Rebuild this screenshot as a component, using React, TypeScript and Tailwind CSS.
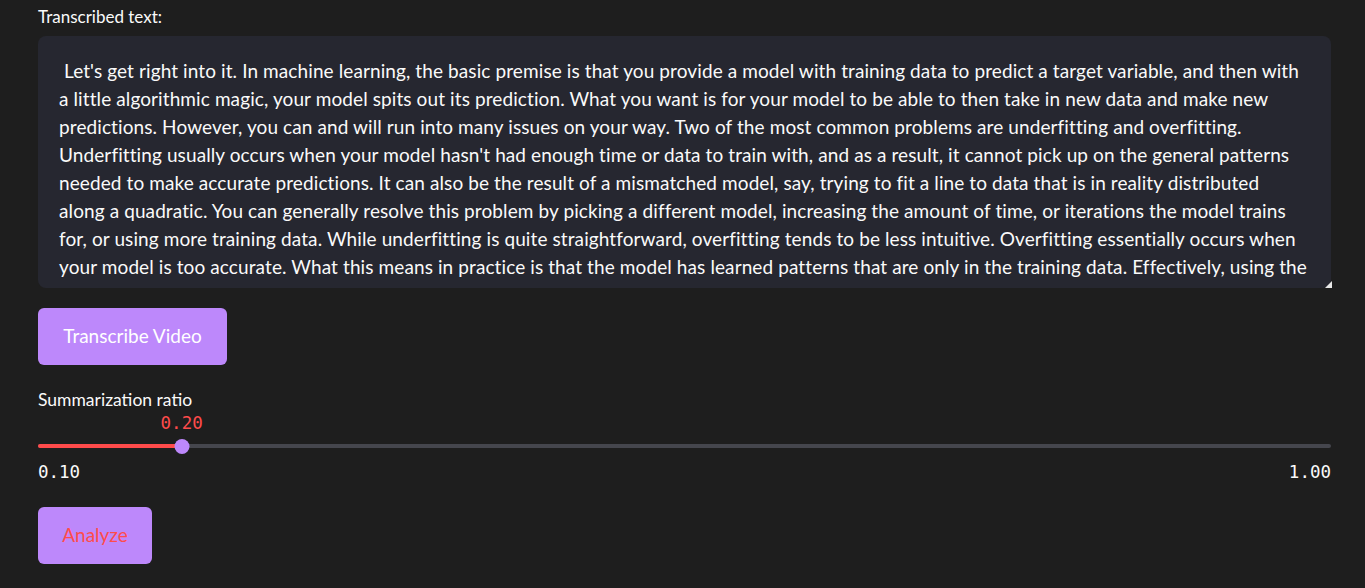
const lines = [
  " Let's get right into it. In machine learning, the basic premise is that you provide a model with training data to predict a target variable, and then with",
  "a little algorithmic magic, your model spits out its prediction. What you want is for your model to be able to then take in new data and make new",
  "predictions. However, you can and will run into many issues on your way. Two of the most common problems are underfitting and overfitting.",
  "Underfitting usually occurs when your model hasn't had enough time or data to train with, and as a result, it cannot pick up on the general patterns",
  "needed to make accurate predictions. It can also be the result of a mismatched model, say, trying to fit a line to data that is in reality distributed",
  "along a quadratic. You can generally resolve this problem by picking a different model, increasing the amount of time, or iterations the model trains",
  "for, or using more training data. While underfitting is quite straightforward, overfitting tends to be less intuitive. Overfitting essentially occurs when",
  "your model is too accurate. What this means in practice is that the model has learned patterns that are only in the training data. Effectively, using the",
];

export default function App() {
  const ratio = 0.2;
  const pct = ((ratio - 0.1) / 0.9) * 100;

  return (
    <main className="min-h-screen bg-[#1e1e1e] font-['Lato','Liberation_Sans',sans-serif] text-[#fafafa]">
      <div className="flex flex-col items-start pl-[38px] pr-[34px] pt-[5px]">
        <label className="text-[17px] leading-[24px]">Transcribed text:</label>

        {/* text area */}
        <div className="relative mt-[7px] h-[252px] w-full">
          <div className="h-full overflow-hidden rounded-lg bg-[#262730] px-[21px] pt-[21px]">
            {lines.map((l, i) => (
              <div key={i} className="whitespace-pre text-[19px] leading-[28px] tracking-[0.1px]">
                {l}
              </div>
            ))}
          </div>
          <span className="absolute bottom-0 right-[-1px] h-0 w-0 border-b-[7px] border-l-[7px] border-b-[#e8e8e8] border-l-transparent" />
        </div>

        <button className="mt-[20px] h-[57px] w-[189px] rounded-md bg-[#bd88fb] text-[19px] text-white">
          Transcribe Video
        </button>

        {/* slider */}
        <div className="mt-[23px] text-[17.5px] leading-[24px]">Summarization ratio</div>
        <div className="flex w-full flex-col">
          <div className="relative h-[22px]">
            <span
              className="absolute -translate-x-1/2 font-['DejaVu_Sans_Mono',monospace] text-[17.5px] leading-[22px] text-[#ff4b4b]"
              style={{ left: `${pct}%` }}
            >
              0.20
            </span>
          </div>
          <div className="relative flex h-[24px] items-center">
            <div className="h-[4px] w-full rounded-full bg-[#45464d]">
              <div className="h-full rounded-full bg-[#ff4b4b]" style={{ width: `${pct}%` }} />
            </div>
            <span
              className="absolute h-[15px] w-[15px] -translate-x-1/2 rounded-full bg-[#bd88fb]"
              style={{ left: `${pct}%` }}
            />
          </div>
          <div className="mt-[2px] flex justify-between font-['DejaVu_Sans_Mono',monospace] text-[17.5px] leading-[24px]">
            <span>0.10</span>
            <span>1.00</span>
          </div>
        </div>

        <button className="mt-[23px] h-[57px] w-[114px] rounded-md bg-[#bd88fb] text-[19px] text-[#ff4b4b]">
          Analyze
        </button>
      </div>
    </main>
  );
}
